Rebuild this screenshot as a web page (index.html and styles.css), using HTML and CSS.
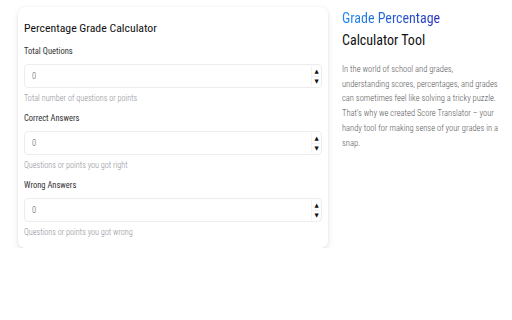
FILE: index.html
```html
<!DOCTYPE html>
<html>
<head>
<meta charset="utf-8">
<link rel="stylesheet" href="styles.css">
</head>
<body>
<div class="page">
  <div class="card">
    <h2 class="card-title">Percentage Grade Calculator</h2>
    <div class="fields">
      <div class="field">
        <label class="label">Total Quetions</label>
        <div class="input"><span class="value">0</span><span class="spin"><span class="arrow">▲</span><span class="arrow">▼</span></span></div>
        <div class="help">Total number of questions or points</div>
      </div>
      <div class="field">
        <label class="label">Correct Answers</label>
        <div class="input"><span class="value">0</span><span class="spin"><span class="arrow">▲</span><span class="arrow">▼</span></span></div>
        <div class="help">Questions or points you got right</div>
      </div>
      <div class="field">
        <label class="label">Wrong Answers</label>
        <div class="input"><span class="value">0</span><span class="spin"><span class="arrow">▲</span><span class="arrow">▼</span></span></div>
        <div class="help">Questions or points you got wrong</div>
      </div>
    </div>
  </div>
  <div class="info">
    <h1 class="info-title"><span class="grad">Grade Percentage</span><br>Calculator Tool</h1>
    <p class="info-text">In the world of school and grades, understanding scores, percentages, and grades can sometimes feel like solving a tricky puzzle. That's why we created Score Translator – your handy tool for making sense of your grades in a snap.</p>
  </div>
</div>
</body>
</html>
```
FILE: styles.css
```css
html, body {
  margin: 0;
  padding: 0;
  background: #ffffff;
}
body {
  font-family: "Roboto Condensed", "Roboto", sans-serif;
  color: #222;
}
.page {
  display: flex;
  align-items: flex-start;
  padding: 7px 0 0 18px;
  gap: 14px;
}
.card {
  width: 298px;
  padding: 13px 6px 10px 6px;
  background: #fff;
  border-radius: 7px;
  box-shadow: 0 3px 6px rgba(0,0,0,0.10), 0 0 2px rgba(0,0,0,0.07);
}
.card-title {
  margin: 0 0 9px 0;
  font-size: 11.8px;
  font-weight: normal;
  line-height: 16px;
  color: #111;
}
.fields {
  display: flex;
  flex-direction: column;
  gap: 8px;
}
.field {
  display: flex;
  flex-direction: column;
}
.label {
  font-size: 8.5px;
  line-height: 12px;
  color: #333;
  margin-bottom: 7px;
}
.input {
  box-sizing: border-box;
  height: 24px;
  border: 1px solid #ececec;
  border-radius: 4px;
  display: flex;
  align-items: center;
  justify-content: space-between;
  padding: 0 0 0 7px;
}
.value {
  font-size: 8.5px;
  color: #555;
  font-weight: 300;
}
.spin {
  display: flex;
  flex-direction: column;
  align-self: stretch;
  width: 9px;
  margin: 1px 0;
  border-left: 1px solid #f3f3f3;
}
.arrow {
  flex: 1;
  display: flex;
  align-items: center;
  justify-content: center;
  font-size: 5.5px;
  color: #111;
  font-family: "DejaVu Sans", sans-serif;
}
.arrow + .arrow {
  border-top: 1px solid #f3f3f3;
}
.help {
  font-size: 8.2px;
  line-height: 12px;
  color: #8e8e96;
  font-weight: 300;
  margin-top: 4px;
}
.info {
  width: 158px;
}
.info-title {
  margin: 0;
  font-size: 14px;
  line-height: 22px;
  font-weight: normal;
  color: #111;
}
.grad {
  background: linear-gradient(90deg, #1c8ef2 0%, #2a30b8 100%);
  -webkit-background-clip: text;
  background-clip: text;
  color: transparent;
}
.info-text {
  margin: 11px 0 0 0;
  font-size: 8.5px;
  line-height: 14.7px;
  color: #555;
  font-weight: 300;
}
```
